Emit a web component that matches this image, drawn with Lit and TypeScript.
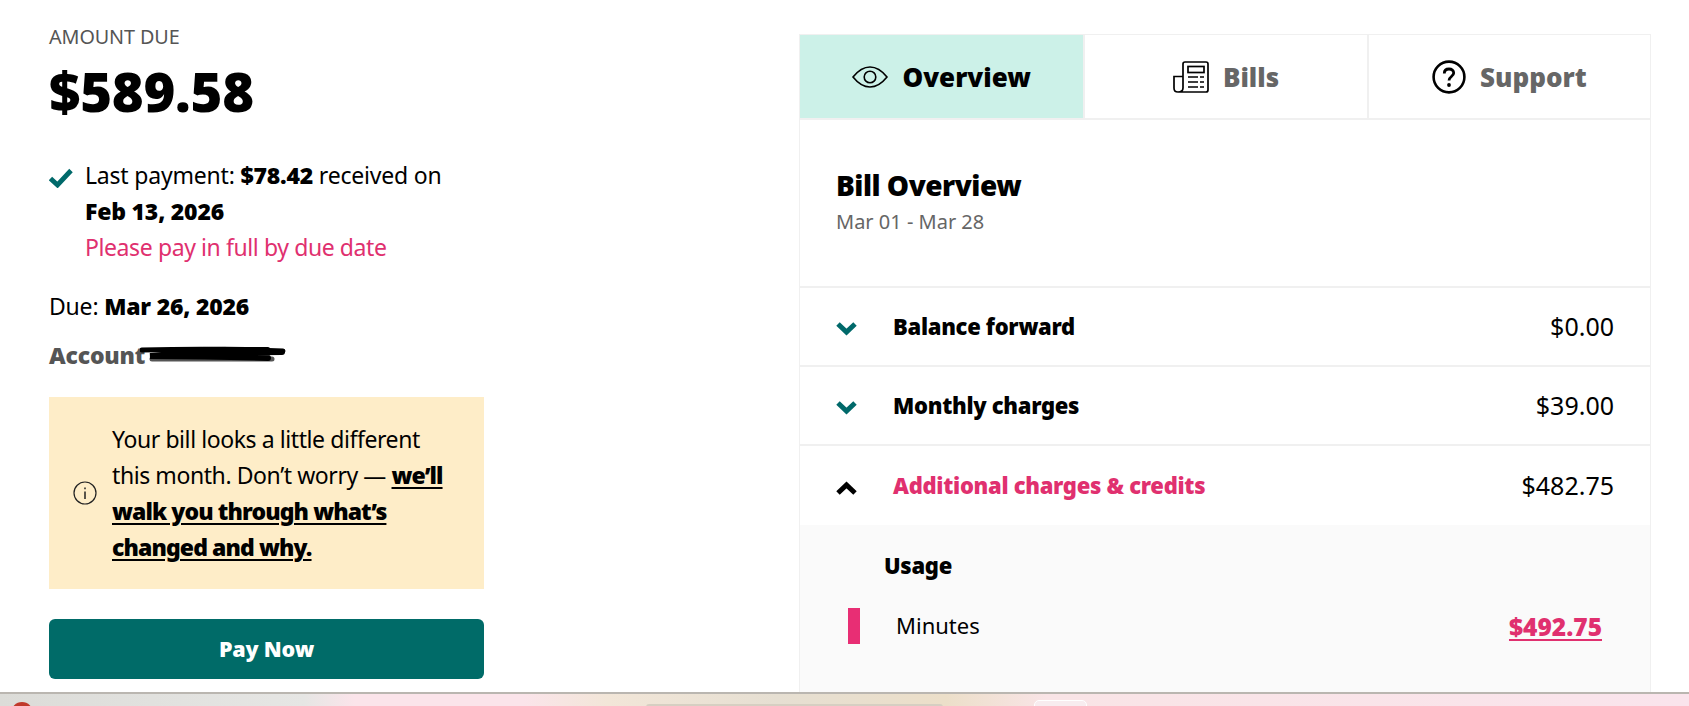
import { LitElement, html, css } from "lit";
import { customElement } from "lit/decorators.js";

const chevron = (up: boolean, color: string) => html`<svg class="chev" viewBox="0 0 21 14" width="21" height="14" fill="none" stroke=${color} stroke-width="5" stroke-linejoin="miter"><path d=${up ? "M2 12 L10.5 4 L19 12" : "M2 2 L10.5 10 L19 2"}></path></svg>`;

@customElement("app-root")
export class AppRoot extends LitElement {
  static styles = css`
    :host { display: block; height: 706px; overflow: hidden; background: #fff; color: #000; font-family: "Noto Sans", "Open Sans", sans-serif; }
    * { box-sizing: border-box; }
    b { font-weight: 900; }
    .page { height: 692px; display: flex; padding-left: 49px; overflow: hidden; }
    .left { width: 435px; flex: none; display: flex; flex-direction: column; padding-top: 24px; font-size: 23px; line-height: 36px; letter-spacing: -0.2px; }
    .label { font-size: 19.8px; line-height: 26px; color: #555; letter-spacing: -0.1px; }
    .amount { font-size: 54.5px; line-height: 64px; font-weight: 900; letter-spacing: -0.3px; margin-top: 9px; }
    .last { display: flex; margin-top: 34px; }
    .check { flex: none; width: 24px; height: 20px; margin: 11px 12px 0 0; }
    .pink { color: #e0306f; letter-spacing: -0.4px; }
    .due { margin-top: 23px; }
    .account { margin-top: 13px; color: #555; font-weight: 900; position: relative; width: 240px; }
    .scribble { position: absolute; left: 91px; top: 9px; }
    .notice { margin-top: 24px; height: 192px; background: #feedc8; display: flex; align-items: center; padding: 0 30px 0 24px; gap: 15px; letter-spacing: -0.42px; }
    .notice svg { flex: none; }
    .notice a { color: #000; font-weight: 900; text-decoration: underline; text-decoration-thickness: 2px; text-underline-offset: 3px; letter-spacing: -0.9px; }
    .pay { margin-top: 30px; height: 60px; background: #006b68; border-radius: 6px; color: #fff; display: flex; align-items: center; justify-content: center; font-size: 21.5px; font-weight: 900; }
    .panel { width: 852px; flex: none; margin: 34px 0 0 315px; border: 1px solid #f0f0f0; border-bottom: 0; display: flex; flex-direction: column; }
    .tabs { display: grid; grid-template-columns: repeat(3, 1fr); height: 85px; border-bottom: 2px solid #f0f0f0; flex: none; }
    .tab { display: flex; align-items: center; justify-content: center; gap: 14px; font-size: 26px; font-weight: 900; color: #666; border-left: 2px solid #f0f0f0; }
    .tab:first-child { background: #ccf1e8; color: #000; border-left: 0; }
    .head { height: 168px; flex: none; padding: 45px 36px 0; border-bottom: 2px solid #f0f0f0; }
    .head h2 { margin: 0; font-size: 28px; line-height: 40px; font-weight: 900; letter-spacing: -0.5px; }
    .head p { margin: 0; font-size: 20px; line-height: 30px; color: #666; margin-top: 2px; }
    .row { height: 79px; flex: none; display: flex; align-items: center; padding: 0 36px 2px; font-size: 22px; border-bottom: 2px solid #f0f0f0; }
    .row.open { border-bottom: 0; }
    .chev { flex: none; margin: 6px 36px 0 0; }
    .row .name { flex: 1; font-weight: 900; letter-spacing: -0.3px; }
    .row .name.pink { color: #e0306f; letter-spacing: -0.3px; }
    .val { font-size: 25px; }
    .detail { flex: 1; background: #fafafa; padding: 22px 48px 0 48px; }
    .detail h3 { margin: 0 0 0 36px; font-size: 22px; line-height: 36px; font-weight: 900; letter-spacing: -0.3px; }
    .usage { display: flex; align-items: center; margin-top: 25px; height: 36px; font-size: 22px; }
    .bar { width: 12px; height: 36px; background: #e82e74; margin-right: 36px; flex: none; }
    .usage span { flex: 1; position: relative; top: -1px; }
    .usage a { color: #e0306f; font-size: 24.5px; font-weight: 900; letter-spacing: 0; text-decoration: underline; text-decoration-thickness: 2px; text-underline-offset: 3px; }
    .taskbar { height: 14px; border-top: 2px solid #bab6b0; background: linear-gradient(90deg, #dcdcd8 0, #e6e6e4 18%, #fbe4ea 21%, #fbe4ea 31%, #f2e6d8 36%, #e6dfd2 46%, #ecdfc9 56%, #f9e4e6 62%, #fae4ec 100%); display: flex; align-items: flex-start; padding-left: 11px; overflow: hidden; }
    .dot { width: 22px; height: 22px; border-radius: 50%; background: #c0392b; margin-top: 8px; flex: none; }
    .tbar-mid { width: 297px; height: 6px; margin: 10px 0 0 613px; background: #d6cfc2; border-radius: 3px 3px 0 0; flex: none; }
    .tbar-win { width: 53px; height: 12px; margin: 6px 0 0 91px; background: #f8ecef; border: 1px solid #fff; border-radius: 5px 5px 0 0; flex: none; }
  `;

  render() {
    return html`
      <div class="page">
        <section class="left">
          <div class="label">AMOUNT DUE</div>
          <div class="amount">$589.58</div>
          <div class="last">
            <svg class="check" viewBox="0 0 24 20" fill="none" stroke="#00696a" stroke-width="4.8"><path d="M1.5 10.5 L8.5 17 L22 2.5"></path></svg>
            <div>Last payment: <b>$78.42</b> received on<br /><b>Feb 13, 2026</b><br /><span class="pink">Please pay in full by due date</span></div>
          </div>
          <div class="due">Due: <b>Mar 26, 2026</b></div>
          <div class="account">Account
            <svg class="scribble" width="146" height="20" viewBox="0 0 146 20" fill="none" stroke-linecap="round"><path stroke="#555" stroke-width="5" d="M12 13 H132"></path><path stroke="#000" stroke-width="5" d="M2 4 C40 3 100 3 143 5"></path><path stroke="#000" stroke-width="6" d="M142 6 C100 6 50 7 10 10 C50 10 100 11 128 12"></path><path stroke="#000" stroke-width="4" d="M30 4 C60 2 100 3 128 3"></path></svg>
          </div>
          <div class="notice">
            <svg width="24" height="24" viewBox="0 0 24 24" fill="none" stroke="#222" stroke-width="1.2"><circle cx="12" cy="12" r="11"></circle><path stroke-width="1.5" d="M12 10.5 V18 M12 6.5 V8.2"></path></svg>
            <div>Your bill looks a little different this month. Don’t worry — <a href="#">we’ll walk you through what’s changed and why.</a></div>
          </div>
          <div class="pay">Pay Now</div>
        </section>
        <section class="panel">
          <div class="tabs">
            <div class="tab">
              <svg width="36" height="22" viewBox="0 0 36 22" fill="none" stroke="#000" stroke-width="1.6"><path d="M1 11 C7 3.5 12 1 18 1 C24 1 29 3.5 35 11 C29 18.5 24 21 18 21 C12 21 7 18.5 1 11 Z"></path><circle cx="18" cy="11" r="5.8"></circle></svg>
              <span>Overview</span>
            </div>
            <div class="tab">
              <svg width="36" height="32" viewBox="0 0 36 32" fill="none" stroke="#000" stroke-width="1.7"><path d="M10 27 V3 Q10 1 12 1 H33 Q35 1 35 3 V29 Q35 31 33 31 H5 M5 31 Q1 31 1 27 V15.5 H10 M10 27 Q10 31 5 31"></path><rect x="15" y="5.5" width="16" height="6"></rect><path d="M15 16 H25 M27 16 H31 M15 21 H25 M27 21 H31 M15 26 H25 M27 26 H31"></path></svg>
              <span>Bills</span>
            </div>
            <div class="tab">
              <svg width="34" height="34" viewBox="0 0 34 34" fill="none" stroke="#000" stroke-width="2.6"><circle cx="17" cy="17" r="15.4"></circle><path stroke-width="2.8" d="M12.3 13.5 C12.3 10.5 14.4 9 17 9 C19.8 9 21.7 10.7 21.7 13 C21.7 16.4 17 16.6 17 20.4"></path><circle cx="17" cy="25" r="1.9" fill="#000" stroke="none"></circle></svg>
              <span>Support</span>
            </div>
          </div>
          <div class="head">
            <h2>Bill Overview</h2>
            <p>Mar 01 - Mar 28</p>
          </div>
          <div class="row">${chevron(false, "#00696a")}<span class="name">Balance forward</span><span class="val">$0.00</span></div>
          <div class="row">${chevron(false, "#00696a")}<span class="name">Monthly charges</span><span class="val">$39.00</span></div>
          <div class="row open">${chevron(true, "#000")}<span class="name pink">Additional charges &amp; credits</span><span class="val">$482.75</span></div>
          <div class="detail">
            <h3>Usage</h3>
            <div class="usage"><div class="bar"></div><span>Minutes</span><a href="#">$492.75</a></div>
          </div>
        </section>
      </div>
      <div class="taskbar"><div class="dot"></div><div class="tbar-mid"></div><div class="tbar-win"></div></div>
    `;
  }
}
